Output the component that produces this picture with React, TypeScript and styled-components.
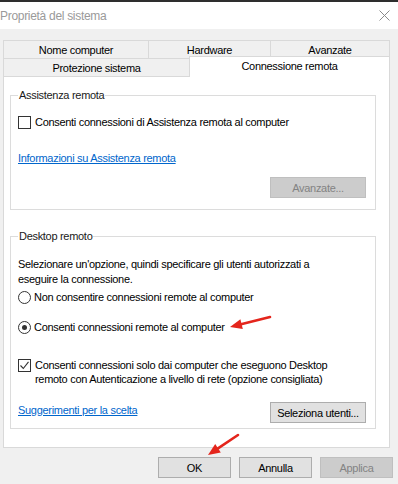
import React from "react";
import styled, { createGlobalStyle } from "styled-components";

const GlobalStyle = createGlobalStyle`
  html, body {
    margin: 0;
    padding: 0;
    background: #f0f0f0;
  }
  body {
    font-family: "Liberation Sans", Arial, sans-serif;
    font-size: 11px;
    color: #000;
  }
`;

const Window = styled.div`
  position: relative;
  width: 398px;
  height: 484px;
  overflow: hidden;
  background: #f0f0f0;
  display: flex;
  flex-direction: column;
  letter-spacing: -0.3px;
`;

const TitleBar = styled.div`
  height: 27px;
  border-top: 2px solid #2e2e2e;
  background: #fff;
  display: flex;
  align-items: center;
  justify-content: space-between;
  padding-right: 8px;
`;

const Title = styled.span`
  font-size: 12px;
  color: #9a9a9a;
`;

const Tabs = styled.div`
  margin: 11px 0 0 3px;
  width: 387px;
`;

const TabRow = styled.div`
  display: flex;
  height: 18px;
`;

const Tab = styled.div<{ $w: number; $active?: boolean; $last?: boolean }>`
  box-sizing: border-box;
  width: ${(p) => p.$w}px;
  height: ${(p) => (p.$active ? 21 : 18)}px;
  margin-top: ${(p) => (p.$active ? -2 : 0)}px;
  padding-bottom: ${(p) => (p.$active ? 3 : 0)}px;
  position: relative;
  z-index: ${(p) => (p.$active ? 1 : 0)};
  display: flex;
  align-items: center;
  justify-content: center;
  background: ${(p) => (p.$active ? "#fff" : "#f0f0f0")};
  border-top: 1px solid #d9d9d9;
  border-left: 1px solid #d9d9d9;
  border-right: ${(p) => (p.$last ? "1px solid #d9d9d9" : "none")};
`;

const Page = styled.div`
  box-sizing: border-box;
  margin-left: 3px;
  width: 387px;
  height: 372px;
  background: #fff;
  border: 1px solid #d9d9d9;
  padding: 11px 0 0 6px;
`;

const Group = styled.fieldset<{ $gap?: number }>`
  box-sizing: border-box;
  width: 366px;
  min-width: 0;
  margin: ${(p) => p.$gap ?? 0}px 0 0 0;
  padding: 0 9px 0 7px;
  border: 1px solid #dcdcdc;
`;

const Legend = styled.legend`
  padding: 0 1px;
  line-height: 14px;
  color: #1a1a1a;
`;

const Row = styled.div<{ $top: number }>`
  display: flex;
  align-items: flex-start;
  margin-top: ${(p) => p.$top}px;
  line-height: 14px;
`;

const Text = styled.p<{ $top: number }>`
  margin: ${(p) => p.$top}px 0 0 0;
  line-height: 15px;
`;

const Box = styled.span`
  box-sizing: border-box;
  flex: none;
  width: 13px;
  height: 13px;
  margin: 1px 4px 0 0;
  border: 1px solid #333;
  background: #fff;
  display: flex;
  align-items: center;
  justify-content: center;
`;

const Radio = styled(Box)`
  border-radius: 50%;
  margin-right: 3px;
`;

const Dot = styled.span`
  width: 5px;
  height: 5px;
  border-radius: 50%;
  background: #333;
`;

const Link = styled.a<{ $top?: number }>`
  display: inline-block;
  margin-top: ${(p) => p.$top ?? 0}px;
  line-height: 14px;
  color: #0066cc;
  text-decoration: underline;
`;

const Actions = styled.div<{ $top: number; $bottom: number }>`
  display: flex;
  justify-content: space-between;
  align-items: flex-start;
  margin-top: ${(p) => p.$top}px;
  padding-bottom: ${(p) => p.$bottom}px;
`;

const Button = styled.button<{ $w: number }>`
  box-sizing: border-box;
  width: ${(p) => p.$w}px;
  height: 21px;
  padding: 0;
  font: inherit;
  letter-spacing: inherit;
  color: #000;
  background: #e1e1e1;
  border: 1px solid #adadad;
  border-radius: 0;
  &:disabled {
    color: #838383;
    background: #cccccc;
    border-color: #bfbfbf;
  }
`;

const Footer = styled.div`
  display: flex;
  justify-content: flex-end;
  gap: 8px;
  margin-top: 9px;
  padding-right: 5px;
`;

const Overlay = styled.svg`
  position: absolute;
  left: 0;
  top: 0;
  pointer-events: none;
`;

function Check() {
  return (
    <svg width="11" height="11" viewBox="0 0 11 11">
      <path d="M1.5 5.5 L4.3 8.5 L9.5 1.8" fill="none" stroke="#333" strokeWidth="1.1" />
    </svg>
  );
}

function Arrow({ d, head }: { d: string; head: string }) {
  return (
    <g>
      <path d={d} stroke="#e4251c" strokeWidth="2.6" strokeLinecap="round" fill="none" />
      <polygon points={head} fill="#e4251c" />
    </g>
  );
}

export default function App() {
  return (
    <>
      <GlobalStyle />
      <Window>
        <TitleBar>
          <Title>Proprietà del sistema</Title>
          <svg width="11" height="11" viewBox="0 0 11 11">
            <path d="M0.5 0.5 L10.5 10.5 M10.5 0.5 L0.5 10.5" stroke="#8a8a8a" strokeWidth="1" />
          </svg>
        </TitleBar>

        <Tabs>
          <TabRow>
            <Tab $w={145}>Nome computer</Tab>
            <Tab $w={122}>Hardware</Tab>
            <Tab $w={120} $last>
              Avanzate
            </Tab>
          </TabRow>
          <TabRow>
            <Tab $w={186}>Protezione sistema</Tab>
            <Tab $w={201} $active $last>
              Connessione remota
            </Tab>
          </TabRow>
        </Tabs>

        <Page>
          <Group>
            <Legend>Assistenza remota</Legend>
            <Row $top={13}>
              <Box />
              <span>Consenti connessioni di Assistenza remota al computer</span>
            </Row>
            <Link $top={22}>Informazioni su Assistenza remota</Link>
            <Actions $top={12} $bottom={11}>
              <span />
              <Button $w={96} disabled>
                Avanzate...
              </Button>
            </Actions>
          </Group>

          <Group $gap={19}>
            <Legend>Desktop remoto</Legend>
            <Text $top={14}>
              Selezionare un'opzione, quindi specificare gli utenti autorizzati a
              <br />
              eseguire la connessione.
            </Text>
            <Row $top={3}>
              <Radio />
              <span>Non consentire connessioni remote al computer</span>
            </Row>
            <Row $top={16}>
              <Radio>
                <Dot />
              </Radio>
              <span>Consenti connessioni remote al computer</span>
            </Row>
            <Row $top={24}>
              <Box>
                <Check />
              </Box>
              <span>
                Consenti connessioni solo dai computer che eseguono Desktop
                <br />
                remoto con Autenticazione a livello di rete (opzione consigliata)
              </span>
            </Row>
            <Actions $top={16} $bottom={5}>
              <Link $top={1}>Suggerimenti per la scelta</Link>
              <Button $w={96}>Seleziona utenti...</Button>
            </Actions>
          </Group>
        </Page>

        <Footer>
          <Button $w={73}>OK</Button>
          <Button $w={73}>Annulla</Button>
          <Button $w={73} disabled>
            Applica
          </Button>
        </Footer>

        <Overlay width="398" height="484" viewBox="0 0 398 484">
          <Arrow d="M270 317 L241 324.3" head="230,327 242.8,329 240.4,319.3" />
          <Arrow d="M238 435 L218 448.3" head="208,455 220.8,452.5 215.2,444.1" />
        </Overlay>
      </Window>
    </>
  );
}
